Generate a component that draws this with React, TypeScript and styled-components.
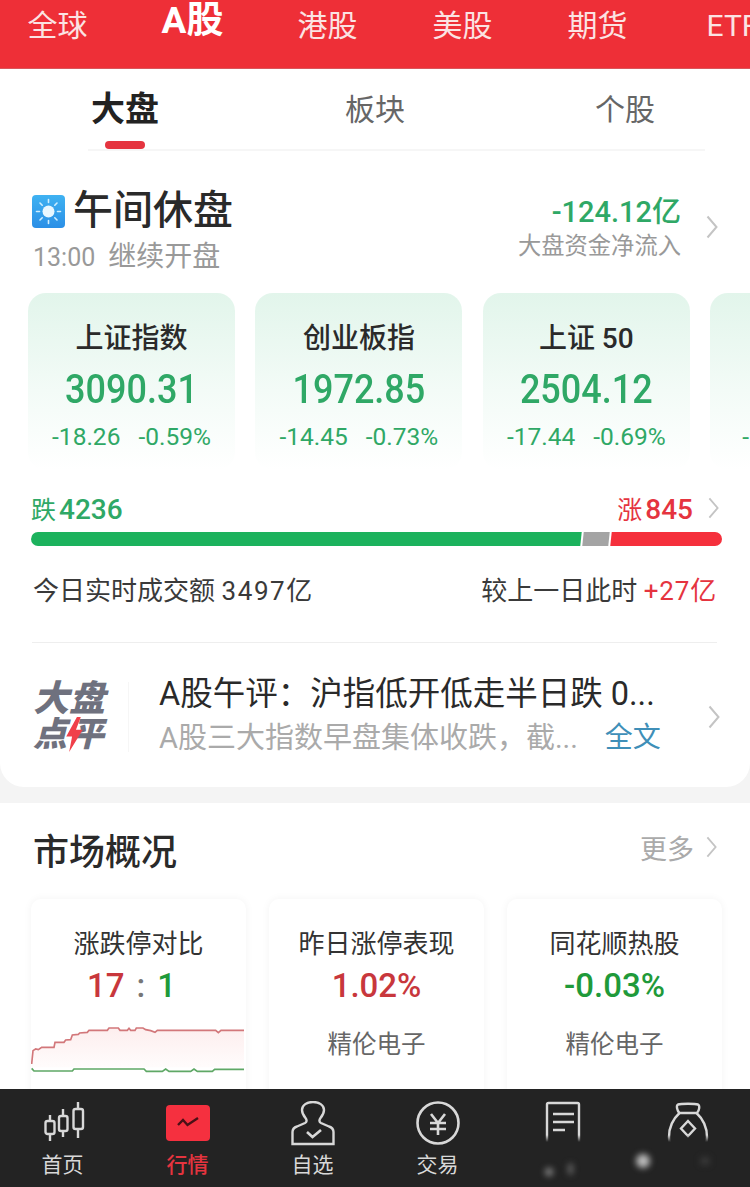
import React from 'react'
import styled, { createGlobalStyle } from 'styled-components'

const red = '#e5343f'
const green = '#2fa866'
const font = 'Roboto, "Noto Sans CJK SC", sans-serif'

const GlobalStyle = createGlobalStyle`
  html, body {
    margin: 0;
    padding: 0;
    background: #fff;
  }
  body {
    font-family: ${font};
  }
`

const Screen = styled.div`
  width: 750px;
  height: 1187px;
  display: flex;
  flex-direction: column;
  overflow: hidden;
  position: relative;
  background: #f4f4f4;
`

const Scroll = styled.div`
  flex: 1;
  min-height: 0;
  overflow: hidden;
`

const TopBar = styled.div`
  height: 68px;
  background: #ee2f37;
  border-bottom: 1px solid #d9565b;
  display: flex;
  margin-left: -10px;
  width: 770px;
  overflow: hidden;
`

const TopItem = styled.div<{ $active?: boolean }>`
  flex: 0 0 135px;
  text-align: center;
  color: ${(p) => (p.$active ? '#fff' : '#fbe3e3')};
  font-size: ${(p) => (p.$active ? '37px' : '30px')};
  font-weight: ${(p) => (p.$active ? 700 : 400)};
  line-height: ${(p) => (p.$active ? '41px' : '52px')};
  white-space: nowrap;
`

const Panel = styled.div`
  background: #fff;
  border-radius: 0 0 24px 24px;
  height: 718px;
  overflow: hidden;
`

const SubTabs = styled.div`
  display: grid;
  grid-template-columns: repeat(3, 250px);
  height: 82px;
  position: relative;
  &::after {
    content: '';
    position: absolute;
    left: 88px;
    right: 45px;
    bottom: 0;
    height: 2px;
    background: #f6f6f6;
  }
`

const SubTab = styled.div<{ $active?: boolean }>`
  position: relative;
  text-align: center;
  font-size: ${(p) => (p.$active ? '34px' : '30px')};
  line-height: 81px;
  color: ${(p) => (p.$active ? '#222' : '#666')};
  font-weight: ${(p) => (p.$active ? 700 : 400)};
  ${(p) =>
    p.$active &&
    `&::after {
      content: '';
      position: absolute;
      left: 105px;
      width: 40px;
      bottom: 2px;
      height: 8px;
      border-radius: 4px;
      background: ${red};
    }`}
`

const Status = styled.div`
  display: flex;
  justify-content: space-between;
  padding: 37px 32px 0 32px;
  height: 105px;
`

const StatusLeft = styled.div`
  display: flex;
  flex-direction: column;
`

const StatusTitleRow = styled.div`
  display: flex;
  align-items: center;
  gap: 8px;
  height: 46px;
`

const StatusTitle = styled.div`
  font-size: 40px;
  line-height: 46px;
  font-weight: 500;
  color: #2a2a2a;
`

const StatusSub = styled.div`
  display: flex;
  align-items: baseline;
  gap: 13px;
  margin-top: 4px;
  padding-left: 1px;
  color: #999;
  font-size: 28px;
  line-height: 38px;
`

const StatusTime = styled.span`
  font-size: 25px;
`

const StatusRight = styled.div`
  display: flex;
  align-items: center;
  gap: 25px;
  margin-top: 1px;
  height: 76px;
`

const Flow = styled.div`
  text-align: right;
`

const FlowValue = styled.div`
  color: ${green};
  font-size: 29px;
  line-height: 38px;
  font-weight: 500;
`

const FlowLabel = styled.div`
  color: #999;
  font-size: 23.3px;
  line-height: 30px;
`

const Cards = styled.div`
  display: flex;
  gap: 20.4px;
  padding-left: 28px;
  width: 900px;
`

const IndexCard = styled.div`
  flex: 0 0 207px;
  height: 177px;
  border-radius: 18px;
  background: linear-gradient(180deg, #e2f5eb 0%, #f3fbf7 55%, #fff 100%);
  text-align: center;
  padding-top: 26px;
  box-sizing: border-box;
`

const IndexName = styled.div`
  font-size: 28px;
  line-height: 40px;
  font-weight: 500;
  color: #2a2a2a;
  min-height: 40px;
`

const IndexValue = styled.div`
  font-size: 36px;
  line-height: 52px;
  margin-top: 5px;
  font-weight: 500;
  color: ${green};
  min-height: 52px;
  transform: scaleY(1.12);
`

const IndexChange = styled.div<{ $partial?: boolean }>`
  display: flex;
  justify-content: ${(p) => (p.$partial ? 'flex-start' : 'center')};
  gap: 18px;
  font-size: 24.5px;
  line-height: 34px;
  margin-top: 4px;
  color: ${green};
  padding-left: ${(p) => (p.$partial ? '32px' : '0')};
`

const Breadth = styled.div`
  padding: 20px 28px 0 31px;
`

const BreadthHead = styled.div`
  display: flex;
  justify-content: space-between;
  align-items: center;
  height: 36px;
  padding-right: 3px;
  font-size: 28px;
  font-weight: 500;
`

const Count = styled.div<{ $up?: boolean }>`
  display: flex;
  align-items: baseline;
  gap: 3px;
  color: ${(p) => (p.$up ? red : green)};
  small {
    font-size: 25px;
    font-weight: 400;
  }
`

const BreadthRight = styled.div`
  display: flex;
  align-items: center;
  gap: 15px;
`

const Bar = styled.div`
  display: flex;
  gap: 2px;
  height: 14px;
  margin-top: 6px;
  border-radius: 7px;
  overflow: hidden;
`

const BarPart = styled.div<{ $color: string; $width: number }>`
  flex: 0 0 ${(p) => p.$width}px;
  background: ${(p) => p.$color};
  transform: skewX(-6deg);
`

const Turnover = styled.div`
  display: flex;
  justify-content: space-between;
  margin-left: 32px;
  width: 685px;
  height: 97px;
  padding: 25px 0 0 1px;
  box-sizing: border-box;
  font-size: 26px;
  line-height: 40px;
  color: #3a3a3a;
  border-bottom: 1px solid #eee;
`

const Figure = styled.span<{ $up?: boolean }>`
  letter-spacing: ${(p) => (p.$up ? '0.8px' : '1.6px')};
  color: ${(p) => (p.$up ? red : '#3a3a3a')};
`

const News = styled.div`
  display: flex;
  align-items: center;
  padding: 30px 30px 0 33px;
`

const Logo = styled.div`
  flex: 0 0 95px;
  height: 70px;
  border-right: 1px solid #f6f6f6;
  margin-right: 30px;
  font-weight: 900;
  font-style: italic;
  color: #6f717e;
`

const LogoLine = styled.div<{ $size: number }>`
  display: flex;
  align-items: center;
  height: 35px;
  line-height: 35px;
  font-size: ${(p) => p.$size}px;
  svg {
    margin: 0 -13px 0 -1px;
    position: relative;
    z-index: 1;
  }
`

const NewsBody = styled.div`
  flex: 1;
`

const NewsTitle = styled.div`
  font-size: 32.5px;
  line-height: 43px;
  color: #2a2a2a;
  white-space: nowrap;
`

const NewsSub = styled.div`
  display: flex;
  gap: 27px;
  font-size: 29px;
  line-height: 44px;
  color: #aaa;
  white-space: nowrap;
`

const FullLink = styled.span`
  color: #3f8fb8;
  font-size: 28px;
`

const Market = styled.div`
  background: #fff;
  margin-top: 16px;
  height: 286px;
  padding: 0 28px 0 31px;
`

const MarketHead = styled.div`
  display: flex;
  justify-content: space-between;
  align-items: center;
  height: 96px;
  padding: 0 5px 4px 2px;
  box-sizing: border-box;
`

const MarketTitle = styled.div`
  font-size: 36px;
  font-weight: 500;
  color: #2a2a2a;
`

const More = styled.div`
  display: flex;
  align-items: center;
  gap: 12px;
  font-size: 27px;
  color: #aaa;
  margin-top: -4px;
`

const StatGrid = styled.div`
  display: grid;
  grid-template-columns: repeat(3, 215px);
  gap: 23px;
`

const StatCard = styled.div`
  height: 200px;
  border-radius: 10px;
  box-shadow: 0 0 8px rgba(0, 0, 0, 0.05);
  text-align: center;
  padding-top: 27px;
  box-sizing: border-box;
`

const StatTitle = styled.div`
  font-size: 26px;
  line-height: 36px;
  color: #333;
`

const StatValue = styled.div<{ $color: string }>`
  font-size: 33px;
  line-height: 46px;
  margin-top: 1px;
  font-weight: 500;
  color: ${(p) => p.$color};
`

const Ratio = styled.div`
  display: flex;
  justify-content: center;
  gap: 12px;
  font-size: 33px;
  line-height: 42px;
  margin-top: 3px;
  font-weight: 500;
  margin-left: -14px;
`

const RatioPart = styled.span<{ $color: string }>`
  color: ${(p) => p.$color};
`

const StatName = styled.div`
  font-size: 24.5px;
  line-height: 36px;
  margin-top: 18px;
  color: #666;
`

const Chart = styled.svg`
  display: block;
  margin-top: 19px;
`

const Nav = styled.div`
  flex: 0 0 98px;
  background: #232323;
  display: grid;
  grid-template-columns: repeat(6, 125px);
  position: relative;
`

const NavItem = styled.div<{ $active?: boolean }>`
  display: flex;
  flex-direction: column;
  align-items: center;
  padding-top: 12px;
  color: ${(p) => (p.$active ? '#e5343f' : '#d8d8d8')};
  font-size: 21px;
  line-height: 30px;
  font-weight: ${(p) => (p.$active ? 500 : 400)};
  svg {
    display: block;
    height: 46px;
    margin-bottom: 3px;
  }
`

const Smudge = styled.div`
  position: absolute;
  left: 530px;
  right: 5px;
  top: 46px;
  bottom: 0;
  background: linear-gradient(180deg, rgba(35, 35, 35, 0) 0, #232323 7px);
`

const Spot = styled.div<{ $x: number; $y: number; $w: number; $h: number; $c: string }>`
  position: absolute;
  left: ${(p) => p.$x}px;
  top: ${(p) => p.$y}px;
  width: ${(p) => p.$w}px;
  height: ${(p) => p.$h}px;
  border-radius: 50%;
  background: ${(p) => p.$c};
  filter: blur(3px);
`

const Chevron = ({ h = 24 }: { h?: number }) => (
  <svg width={h / 2} height={h} viewBox="0 0 12 24" fill="none">
    <path d="M1.5 1.5 10.5 12 1.5 22.5" stroke="#c4c4c4" strokeWidth="2" />
  </svg>
)

const SunIcon = () => (
  <svg width="33" height="33" viewBox="0 0 33 33">
    <defs>
      <linearGradient id="sky" x1="0" y1="0" x2="0" y2="1">
        <stop offset="0" stopColor="#3fb2f2" />
        <stop offset="1" stopColor="#2b8fe6" />
      </linearGradient>
    </defs>
    <rect width="33" height="33" rx="4" fill="url(#sky)" />
    <circle cx="16.5" cy="16.5" r="6" fill="#e9f7ff" />
    <g stroke="#cfeeff" strokeWidth="1.6" strokeLinecap="round">
      <path d="M16.5 4.5v3M16.5 25.5v3M4.5 16.5h3M25.5 16.5h3M8 8l2.2 2.2M22.8 22.8 25 25M8 25l2.2-2.2M22.8 10.2 25 8" />
    </g>
  </svg>
)

const Bolt = () => (
  <svg width="17" height="35" viewBox="0 0 17 36">
    <path d="M11 0 0 20h6L3 36 17 13h-7l5-13z" fill="#f0404a" />
  </svg>
)

const CandleIcon = () => (
  <svg width="44" height="46" viewBox="0 0 44 46" fill="none" stroke="#d8d8d8" strokeWidth="2.4">
    <path d="M9 14v6M9 33v7M22 8v7M22 30v6M37 1v7M37 28v9" />
    <rect x="4.5" y="20" width="9" height="13" rx="2" />
    <rect x="18" y="15" width="8.5" height="15" rx="2" />
    <rect x="32.5" y="8" width="9.5" height="20" rx="2" />
  </svg>
)

const MarketIcon = () => (
  <svg width="44" height="46" viewBox="0 0 44 46" fill="none">
    <rect y="4" width="44" height="36" rx="4" fill="#f5303f" />
    <path d="M12 24l5-5 4.5 5L32 17" stroke="#4a1016" strokeWidth="2.4" />
  </svg>
)

const PersonIcon = () => (
  <svg width="44" height="46" viewBox="0 0 44 46" fill="none" stroke="#d8d8d8" strokeWidth="2.4">
    <path d="M1.5 43V31c0-3 1.500-4.500 4.500-5.500l8-3.500c2-1 2-3 .5-5-2.500-3-3.500-5.500-3.500-8C11 4 16 1 22 1s11 3 11 8c0 2.500-1 5-3.500 8-1.500 2-1.500 4 .5 5l8 3.500c3 1 4.500 2.500 4.500 5.500v12z" />
    <path d="M16 31l5.500 5L30 29" strokeWidth="2.6" />
  </svg>
)

const YuanIcon = () => (
  <svg width="44" height="46" viewBox="0 0 44 46" fill="none" stroke="#d8d8d8" strokeWidth="2.6">
    <circle cx="22" cy="22" r="20.500" />
    <path d="M15 13l7 9 7-9M14 22h16M14 28h16M22 22v12" />
  </svg>
)

const DocIcon = () => (
  <svg width="36" height="46" viewBox="0 0 36 46" fill="none" stroke="#d8d8d8" strokeWidth="2.4">
    <path d="M2 44V3.500C2 2.500 2.500 2 3.500 2h29c1 0 1.500.5 1.500 1.500V44" />
    <path d="M8 13h21M8 21h21M8 29h12" />
  </svg>
)

const BagIcon = () => (
  <svg width="42" height="46" viewBox="0 0 42 46" fill="none" stroke="#d8d8d8" strokeWidth="2.4">
    <path d="M11 3.500C14 2.500 28 2.500 31 3.500c2 1 1.500 6-1 8.500H12.500C10 9.500 9 4.500 11 3.500z" />
    <path d="M12.500 12C6 18 2 26 2 36c0 4 1 8 3 10M29.500 12C36 18 40 26 40 36c0 4-1 8-3 10" />
    <path d="M21 20l7 7.500-7 7.500-7-7.500z" />
  </svg>
)

const limitUp =
  'M38 135L42 95L50 90L58 92L68 85L105 85L108 70L135 70L140 63L155 62L160 48L178 46L182 42L205 40L210 34L265 34L270 27L298 27L303 34L325 34L330 28L335 34L348 34L352 27L372 27L380 32L395 35L408 40L415 34L590 34L598 41L606 34L675 34'
const limitDown =
  'M38 148L45 156L160 156L165 150L375 150L382 157L430 157L440 150L450 157L515 157L525 150L535 157L580 157L587 151L675 151'

const indexes = [
  { name: '上证指数', value: '3090.31', change: '-18.26', percent: '-0.59%' },
  { name: '创业板指', value: '1972.85', change: '-14.45', percent: '-0.73%' },
  { name: '上证 50', value: '2504.12', change: '-17.44', percent: '-0.69%' },
]

const topTabs = ['全球', 'A股', '港股', '美股', '期货', 'ETF']

const App = () => (
  <Screen>
    <GlobalStyle />
    <Scroll>
      <TopBar>
        {topTabs.map((t) => (
          <TopItem key={t} $active={t === 'A股'}>
            {t}
          </TopItem>
        ))}
      </TopBar>
      <Panel>
        <SubTabs>
          <SubTab $active>大盘</SubTab>
          <SubTab>板块</SubTab>
          <SubTab>个股</SubTab>
        </SubTabs>
        <Status>
          <StatusLeft>
            <StatusTitleRow>
              <SunIcon />
              <StatusTitle>午间休盘</StatusTitle>
            </StatusTitleRow>
            <StatusSub>
              <StatusTime>13:00</StatusTime>
              <span>继续开盘</span>
            </StatusSub>
          </StatusLeft>
          <StatusRight>
            <Flow>
              <FlowValue>-124.12亿</FlowValue>
              <FlowLabel>大盘资金净流入</FlowLabel>
            </Flow>
            <Chevron />
          </StatusRight>
        </Status>
        <Cards>
          {indexes.map((i) => (
            <IndexCard key={i.name}>
              <IndexName>{i.name}</IndexName>
              <IndexValue>{i.value}</IndexValue>
              <IndexChange>
                <span>{i.change}</span>
                <span>{i.percent}</span>
              </IndexChange>
            </IndexCard>
          ))}
          <IndexCard>
            <IndexName />
            <IndexValue />
            <IndexChange $partial>
              <span>-</span>
            </IndexChange>
          </IndexCard>
        </Cards>
        <Breadth>
          <BreadthHead>
            <Count>
              <small>跌</small>4236
            </Count>
            <BreadthRight>
              <Count $up>
                <small>涨</small>845
              </Count>
              <Chevron h={22} />
            </BreadthRight>
          </BreadthHead>
          <Bar>
            <BarPart $color="#1cb25d" $width={550} />
            <BarPart $color="#a4a4a4" $width={26} />
            <BarPart $color="#f5303c" $width={115} />
          </Bar>
        </Breadth>
        <Turnover>
          <div>
            今日实时成交额 <Figure>3497亿</Figure>
          </div>
          <div>
            较上一日此时 <Figure $up>+27亿</Figure>
          </div>
        </Turnover>
        <News>
          <Logo>
            <LogoLine $size={36}>大盘</LogoLine>
            <LogoLine $size={34}>
              点
              <Bolt />
              平
            </LogoLine>
          </Logo>
          <NewsBody>
            <NewsTitle>A股午评：沪指低开低走半日跌 0...</NewsTitle>
            <NewsSub>
              <span>A股三大指数早盘集体收跌，截...</span>
              <FullLink>全文</FullLink>
            </NewsSub>
          </NewsBody>
          <Chevron />
        </News>
      </Panel>
      <Market>
        <MarketHead>
          <MarketTitle>市场概况</MarketTitle>
          <More>
            更多
            <Chevron h={22} />
          </More>
        </MarketHead>
        <StatGrid>
          <StatCard>
            <StatTitle>涨跌停对比</StatTitle>
            <Ratio>
              <RatioPart $color="#c8373c">17</RatioPart>
              <RatioPart $color="#777">:</RatioPart>
              <RatioPart $color="#1f9a3a">1</RatioPart>
            </Ratio>
            <Chart width="214" height="48" viewBox="36 21 642 144" fill="none">
              <defs>
                <linearGradient id="fillUp" x1="0" y1="0" x2="0" y2="1">
                  <stop offset="0" stopColor="#fdeeee" />
                  <stop offset="1" stopColor="#fffcfc" />
                </linearGradient>
              </defs>
              <path d={`${limitUp}L675 145L38 145Z`} fill="url(#fillUp)" />
              <path d={limitUp} stroke="#d2777a" strokeWidth="5" />
              <path d={limitDown} stroke="#5fa866" strokeWidth="5" />
            </Chart>
          </StatCard>
          <StatCard>
            <StatTitle>昨日涨停表现</StatTitle>
            <StatValue $color="#c8373c">1.02%</StatValue>
            <StatName>精伦电子</StatName>
          </StatCard>
          <StatCard>
            <StatTitle>同花顺热股</StatTitle>
            <StatValue $color="#1f9a3a">-0.03%</StatValue>
            <StatName>精伦电子</StatName>
          </StatCard>
        </StatGrid>
      </Market>
    </Scroll>
    <Nav>
      <NavItem>
        <CandleIcon />
        首页
      </NavItem>
      <NavItem $active>
        <MarketIcon />
        行情
      </NavItem>
      <NavItem>
        <PersonIcon />
        自选
      </NavItem>
      <NavItem>
        <YuanIcon />
        交易
      </NavItem>
      <NavItem>
        <DocIcon />
      </NavItem>
      <NavItem>
        <BagIcon />
      </NavItem>
      <Smudge>
        <Spot $x={106} $y={19} $w={14} $h={14} $c="#bdbdbd" />
        <Spot $x={15} $y={33} $w={8} $h={8} $c="#8a8a8a" />
        <Spot $x={38} $y={28} $w={5} $h={12} $c="#6f6f6f" />
        <Spot $x={170} $y={22} $w={10} $h={8} $c="#3c3c3c" />
      </Smudge>
    </Nav>
  </Screen>
)

export default App
